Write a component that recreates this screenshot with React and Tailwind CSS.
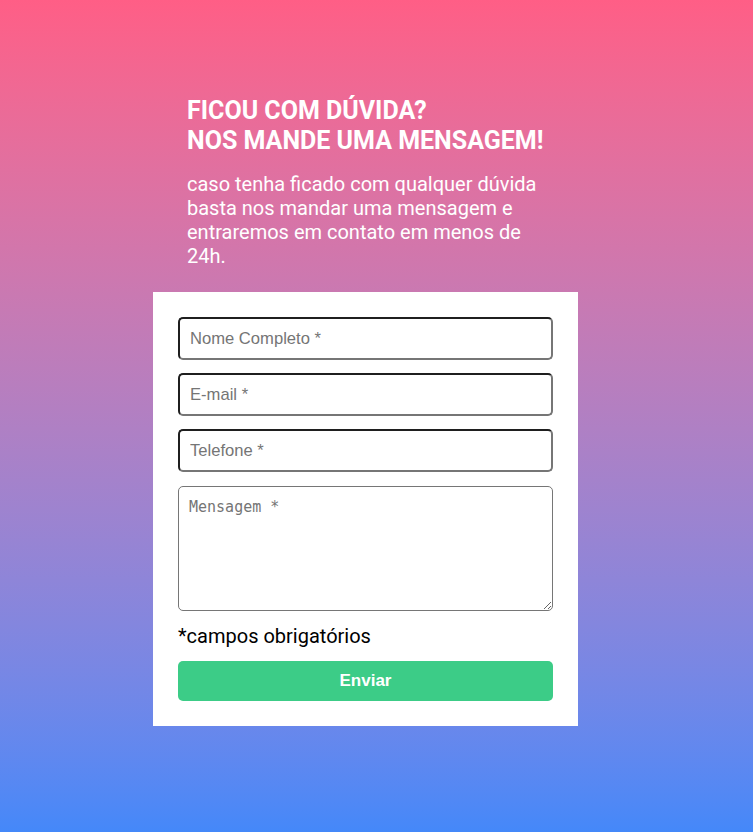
export default function App() {
  const fields = ["Nome Completo *", "E-mail *", "Telefone *"];

  return (
    <div className="min-h-[832px] w-full bg-gradient-to-b from-[#ff5e86] to-[#4488f9] pt-[96px] pb-[106px] pr-[22px]">
      <div className="mx-auto w-[425px]">
        <div className="px-[34px] font-['Roboto',sans-serif] text-white">
          <h1 className="text-[25px] font-bold leading-[30px]">
            FICOU COM DÚVIDA?
            <br />
            NOS MANDE UMA MENSAGEM!
          </h1>
          <p className="mt-[16px] w-[360px] text-[20px] leading-[24px]">
            caso tenha ficado com qualquer dúvida basta nos mandar uma mensagem e entraremos em contato em menos de 24h.
          </p>
        </div>

        <form className="mt-[24px] flex flex-col bg-white px-[25px] pt-[25px] pb-[25px]">
          {fields.map((f) => (
            <input
              key={f}
              placeholder={f}
              className="mb-[13.2px] h-[43px] w-full rounded-[5px] border-2 border-t-[#1f1f1f] border-l-[#1f1f1f] border-b-[#767676] border-r-[#767676] px-[10px] font-['Liberation_Sans',Arial,sans-serif] text-[16.6px] text-black outline-none placeholder:text-[#757575]"
            />
          ))}
          <textarea
            placeholder="Mensagem *"
            className="h-[125px] w-full rounded-[5px] border border-[#767676] px-[10px] py-[9px] font-['DejaVu_Sans_Mono',monospace] text-[15px] outline-none placeholder:text-[#757575]"
          />
          <p className="mt-[12px] font-['Roboto',sans-serif] text-[20px] leading-[26px] text-black">
            *campos obrigatórios
          </p>
          <button
            type="button"
            className="mt-[12px] h-[40px] w-full rounded-[5px] bg-[#3ccc87] font-['Liberation_Sans',Arial,sans-serif] text-[17px] font-bold text-white"
          >
            Enviar
          </button>
        </form>
      </div>
    </div>
  );
}
